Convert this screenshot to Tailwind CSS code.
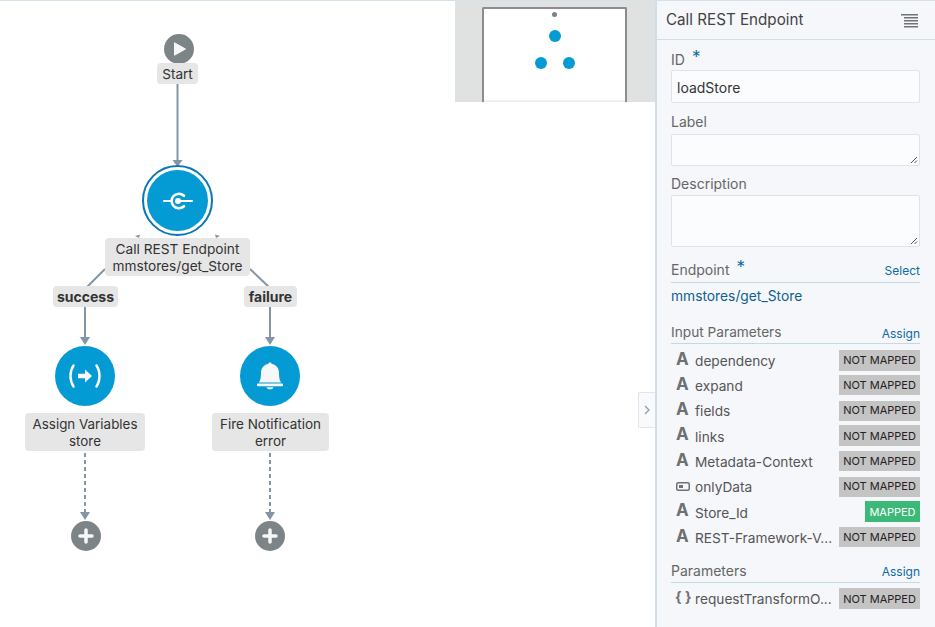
<!DOCTYPE html>
<html>
<head>
<meta charset="utf-8">
<script src="https://cdn.jsdelivr.net/npm/@tailwindcss/browser@4"></script>
</head>
<body class="m-0 bg-white font-['Inter',sans-serif] text-[#333]">
<div class="w-[935px] h-[627px] overflow-hidden flex border-t border-[#d5e2ea] bg-white">
  <div class="relative w-[655px] h-full shrink-0">
    <svg class="absolute left-0 top-[-1px]" width="655" height="627" fill="none">
      <g stroke="#8296a5" stroke-width="2">
        <path d="M177.500 84V162"/>
        <path d="M105 269L87 287"/>
        <path d="M250 269L269 287"/>
        <path d="M85 307V340"/>
        <path d="M270 307V340"/>
        <path d="M85 453V515" stroke-dasharray="4 3"/>
        <path d="M270 453V515" stroke-dasharray="4 3"/>
      </g>
      <g fill="#8296a5">
        <path d="M172.500 160L177.500 167L182.500 160Z"/>
        <path d="M135 236L140 234.500L139 238Z"/>
        <path d="M220 236L215 234.500L216 238Z"/>
        <path d="M80 337L85 345L90 337Z"/>
        <path d="M265 337L270 345L275 337Z"/>
        <path d="M80 512L85 520L90 512Z"/>
        <path d="M265 512L270 520L275 512Z"/>
      </g>
    </svg>

    <!-- Start -->
    <div class="absolute left-[164px] top-[33px] w-[30px] h-[30px] rounded-full bg-[#7d8487] flex items-center justify-center">
      <svg width="16" height="16" viewBox="0 0 16 16"><path d="M3.500 1.800L14.500 8L3.500 14.200Z" fill="#f6f7f8" stroke="#f6f7f8" stroke-linejoin="round"/></svg>
    </div>
    <div class="absolute left-[157px] top-[62px] w-[41px] h-[21px] rounded bg-[#e6e6e6] text-[13.6px] leading-[21px] pt-[1px] text-center">Start</div>

    <!-- REST -->
    <div class="absolute left-[142px] top-[164px] w-[71px] h-[71px] rounded-full border-2 border-[#0a76b7] bg-white flex items-center justify-center">
      <div class="w-[61px] h-[61px] rounded-full bg-[#049bd5] flex items-center justify-center">
        <svg width="32" height="20" viewBox="0 0 32 20" fill="none" stroke="#fff" stroke-linecap="round"><path d="M2 10H8" stroke-width="2"/><path d="M22 4.800A7.300 7.300 0 1 0 22 15.200" stroke-width="2.600"/><path d="M15 10H30" stroke-width="2"/><circle cx="16" cy="10" r="3" fill="#fff" stroke="none"/></svg>
      </div>
    </div>
    <div class="absolute left-[105px] top-[237px] w-[145px] h-[38px] rounded bg-[#e6e6e6] text-[13.700px] leading-[17px] text-center pt-[3px]">Call REST Endpoint<br>mmstores/get_Store</div>

    <div class="absolute left-[53px] top-[285px] w-[65px] h-[21px] rounded bg-[#e6e6e6] text-[14px] leading-[21px] text-center font-bold">success</div>
    <div class="absolute left-[244px] top-[285px] w-[53px] h-[21px] rounded bg-[#e6e6e6] text-[14px] leading-[21px] text-center font-bold">failure</div>

    <!-- Assign -->
    <div class="absolute left-[55px] top-[345px] w-[60px] h-[60px] rounded-full bg-[#049bd5] flex items-center justify-center">
      <svg width="32" height="24" viewBox="0 0 32 24" fill="none"><path d="M4.500 1.500C0.500 7.500 0.500 16.500 4.500 22.500" stroke="#fff" stroke-width="2.400" stroke-linecap="round"/><path d="M27.500 1.500C31.500 7.500 31.500 16.500 27.500 22.500" stroke="#fff" stroke-width="2.400" stroke-linecap="round"/><path d="M9 9.800H16V5.500L23 12L16 18.500V14.200H9Z" fill="#fff"/></svg>
    </div>
    <div class="absolute left-[25px] top-[412px] w-[120px] h-[38px] rounded bg-[#e6e6e6] text-[13.400px] leading-[17px] text-center pt-[3px]">Assign Variables<br>store</div>

    <!-- Fire -->
    <div class="absolute left-[240px] top-[345px] w-[60px] h-[60px] rounded-full bg-[#049bd5] flex items-center justify-center">
      <svg width="28" height="30" viewBox="0 0 28 30"><path d="M12.500 2.800C12.500 1 15.500 1 15.500 2.800C20.500 3.800 23 7.500 23 12C23 16.500 23.500 19 25 21.500H3C4.500 19 5 16.500 5 12C5 7.500 7.500 3.800 12.500 2.800Z" fill="#f6f7f8"/><rect x="1" y="22.500" width="26" height="2.800" rx="1" fill="#f6f7f8"/><path d="M10.500 26.200H17.500C16.800 29 11.200 29 10.500 26.200Z" fill="#f6f7f8"/></svg>
    </div>
    <div class="absolute left-[212px] top-[412px] w-[117px] h-[38px] rounded bg-[#e6e6e6] text-[13.500px] leading-[17px] text-center pt-[3px]">Fire Notification<br>error</div>

    <!-- Plus -->
    <div class="absolute left-[70.500px] top-[520px] w-[30px] h-[30px] rounded-full bg-[#7d8487] flex items-center justify-center">
      <svg width="16" height="16" viewBox="0 0 16 16"><path d="M8 2V14M2 8H14" stroke="#f6f7f8" stroke-width="3.500" stroke-linecap="round"/></svg>
    </div>
    <div class="absolute left-[255px] top-[520px] w-[30px] h-[30px] rounded-full bg-[#7d8487] flex items-center justify-center">
      <svg width="16" height="16" viewBox="0 0 16 16"><path d="M8 2V14M2 8H14" stroke="#f6f7f8" stroke-width="3.500" stroke-linecap="round"/></svg>
    </div>

    <!-- Minimap -->
    <div class="absolute left-[455px] top-0 w-[200px] h-[101px] bg-[#e0e2e2] flex justify-center pt-[6px] pr-[1px]">
      <div class="relative w-[145px] h-[95px] bg-white border-2 border-b-0 border-[#8b8d8e] rounded-t-[2px]">
        <span class="absolute left-[68px] top-[3px] w-[5px] h-[5px] rounded-full bg-[#7d8487]"></span>
        <span class="absolute left-[64.500px] top-[21px] w-[12px] h-[12px] rounded-full bg-[#049bd5]"></span>
        <span class="absolute left-[50.500px] top-[48px] w-[12px] h-[12px] rounded-full bg-[#049bd5]"></span>
        <span class="absolute left-[78.500px] top-[48px] w-[12px] h-[12px] rounded-full bg-[#049bd5]"></span>
        <span class="absolute left-0 right-0 bottom-0 h-[2px] bg-[#f0f0f0]"></span>
      </div>
    </div>

    <!-- Collapse tab -->
    <button class="absolute left-[638px] top-[391px] w-[17px] h-[36px] bg-[#f8fafb] border border-r-0 border-[#dfe5ea] rounded-l-[2px] flex items-center justify-center">
      <svg width="6" height="10" viewBox="0 0 6 10" fill="none"><path d="M1 1L5 5L1 9" stroke="#9aa0a3" stroke-width="1.400"/></svg>
    </button>
  </div>

  <!-- Panel -->
  <aside class="w-[280px] h-full shrink-0 bg-[#f5f7fa] border-l-2 border-[#cfdfe9] text-[14px]">
    <header class="h-[39px] border-b border-[#cfdfe9] flex items-center justify-between pl-[9px] pr-[17px] pt-[1px]">
      <h1 class="text-[15.200px] text-[#444] font-normal">Call REST Endpoint</h1>
      <svg width="17" height="14" viewBox="0 0 17 14" fill="#6f7477"><rect x="0" y="0" width="17" height="1.500"/><rect x="3" y="3" width="14" height="1.500"/><rect x="3" y="6" width="14" height="1.500"/><rect x="3" y="9" width="14" height="1.500"/><rect x="3" y="12" width="14" height="1.500"/></svg>
    </header>
    <div class="pl-[14px] pr-[15px]">
      <div class="h-[30px] flex items-end gap-[7px] text-[#666]"><span class="leading-[20px]">ID</span><span class="text-[#0f6a9f] text-[17px] leading-[24px] mb-[1px]">*</span></div>
      <div class="h-[33px] border border-[#dfe3e7] rounded-[2px] bg-[#fbfcfd] flex items-center px-[5px] pt-[1px] text-[#333]">loadStore</div>

      <div class="h-[31px] flex items-end pb-[2px] text-[#666]">Label</div>
      <div class="relative h-[32px] border border-[#dfe3e7] rounded-[2px] bg-[#fbfcfd]">
        <svg class="absolute right-[1px] bottom-[1px]" width="8" height="8" viewBox="0 0 8 8" stroke="#555"><path d="M1 7L7 1M4.500 7L7 4.500"/></svg>
      </div>

      <div class="h-[29px] flex items-end pb-[1px] text-[#666]">Description</div>
      <div class="relative h-[52px] border border-[#dfe3e7] rounded-[2px] bg-[#fbfcfd]">
        <svg class="absolute right-[1px] bottom-[1px]" width="8" height="8" viewBox="0 0 8 8" stroke="#555"><path d="M1 7L7 1M4.500 7L7 4.500"/></svg>
      </div>

      <div class="h-[36px] border-b border-[#c4d9e4] flex items-end justify-between pb-[2px] text-[#666]">
        <div class="flex gap-[7px] items-end"><span>Endpoint</span><span class="text-[#0f6a9f] text-[17px] leading-[24px] mb-[1px]">*</span></div>
        <span class="text-[12px] text-[#0f6a9f]">Select</span>
      </div>
      <div class="h-[28px] flex items-center pb-[2px] text-[#0f5f8f] text-[13.800px]">mmstores/get_Store</div>

      <div class="h-[33px] border-b border-[#c4d9e4] flex items-end justify-between text-[#666] text-[13.700px]">
        <span>Input Parameters</span>
        <span class="text-[12px] text-[#0f6a9f]">Assign</span>
      </div>

      <ul class="pt-[6px]">
        <li class="flex items-center justify-between h-[20px] mb-[5.330px]">
          <div class="flex items-center pt-[2px]"><span class="w-[24px] pl-[5px] font-bold text-[#707070] text-[17px] leading-none mt-[-4px]">A</span><span class="text-[#555] text-[13.700px]">dependency</span></div>
          <span class="w-[81px] h-[21px] bg-[#c4c4c4] text-[#222] text-[11px] flex items-center justify-center">NOT MAPPED</span>
        </li>
        <li class="flex items-center justify-between h-[20px] mb-[5.330px]">
          <div class="flex items-center pt-[2px]"><span class="w-[24px] pl-[5px] font-bold text-[#707070] text-[17px] leading-none mt-[-4px]">A</span><span class="text-[#555] text-[13.700px]">expand</span></div>
          <span class="w-[81px] h-[20px] bg-[#c4c4c4] text-[#222] text-[11px] flex items-center justify-center">NOT MAPPED</span>
        </li>
        <li class="flex items-center justify-between h-[20px] mb-[5.330px]">
          <div class="flex items-center pt-[2px]"><span class="w-[24px] pl-[5px] font-bold text-[#707070] text-[17px] leading-none mt-[-4px]">A</span><span class="text-[#555] text-[13.700px]">fields</span></div>
          <span class="w-[81px] h-[20px] bg-[#c4c4c4] text-[#222] text-[11px] flex items-center justify-center">NOT MAPPED</span>
        </li>
        <li class="flex items-center justify-between h-[20px] mb-[5.330px]">
          <div class="flex items-center pt-[2px]"><span class="w-[24px] pl-[5px] font-bold text-[#707070] text-[17px] leading-none mt-[-4px]">A</span><span class="text-[#555] text-[13.700px]">links</span></div>
          <span class="w-[81px] h-[21px] bg-[#c4c4c4] text-[#222] text-[11px] flex items-center justify-center">NOT MAPPED</span>
        </li>
        <li class="flex items-center justify-between h-[20px] mb-[5.330px]">
          <div class="flex items-center pt-[2px]"><span class="w-[24px] pl-[5px] font-bold text-[#707070] text-[17px] leading-none mt-[-4px]">A</span><span class="text-[#555] text-[13.700px]">Metadata-Context</span></div>
          <span class="w-[81px] h-[20px] bg-[#c4c4c4] text-[#222] text-[11px] flex items-center justify-center">NOT MAPPED</span>
        </li>
        <li class="flex items-center justify-between h-[20px] mb-[5.330px]">
          <div class="flex items-center pt-[2px]"><span class="w-[24px] pl-[5px]"><svg class="mt-[-3px]" width="14" height="9" viewBox="0 0 14 9" fill="none"><rect x="0.750" y="0.750" width="12.500" height="7.500" rx="1.500" stroke="#707070" stroke-width="1.500"/><rect x="3" y="3" width="4" height="3" fill="#707070"/></svg></span><span class="text-[#555] text-[13.700px]">onlyData</span></div>
          <span class="w-[81px] h-[20px] bg-[#c4c4c4] text-[#222] text-[11px] flex items-center justify-center">NOT MAPPED</span>
        </li>
        <li class="flex items-center justify-between h-[20px] mb-[5.330px]">
          <div class="flex items-center pt-[2px]"><span class="w-[24px] pl-[5px] font-bold text-[#707070] text-[17px] leading-none mt-[-4px]">A</span><span class="text-[#555] text-[13.700px]">Store_Id</span></div>
          <span class="w-[55px] h-[21px] bg-[#3cb878] text-white text-[11px] flex items-center justify-center">MAPPED</span>
        </li>
        <li class="flex items-center justify-between h-[20px]">
          <div class="flex items-center pt-[2px]"><span class="w-[24px] pl-[5px] font-bold text-[#707070] text-[17px] leading-none mt-[-4px]">A</span><span class="text-[#555] text-[13.700px]">REST-Framework-V...</span></div>
          <span class="w-[81px] h-[20px] bg-[#c4c4c4] text-[#222] text-[11px] flex items-center justify-center">NOT MAPPED</span>
        </li>
      </ul>

      <div class="h-[36px] border-b border-[#c4d9e4] flex items-end justify-between pb-[1px] text-[#666]">
        <span class="text-[14px]">Parameters</span>
        <span class="text-[12px] text-[#0f6a9f]">Assign</span>
      </div>
      <div class="flex items-center justify-between h-[21px] mt-[5px]">
        <div class="flex items-center"><span class="w-[24px] pl-[4px] font-bold text-[#707070] text-[14px] leading-none mt-[-4px]">{ }</span><span class="text-[#555] text-[13.700px]">requestTransformO...</span></div>
        <span class="w-[81px] h-[21px] bg-[#c4c4c4] text-[#222] text-[11px] flex items-center justify-center">NOT MAPPED</span>
      </div>
    </div>
  </aside>
</div>
</body>
</html>
